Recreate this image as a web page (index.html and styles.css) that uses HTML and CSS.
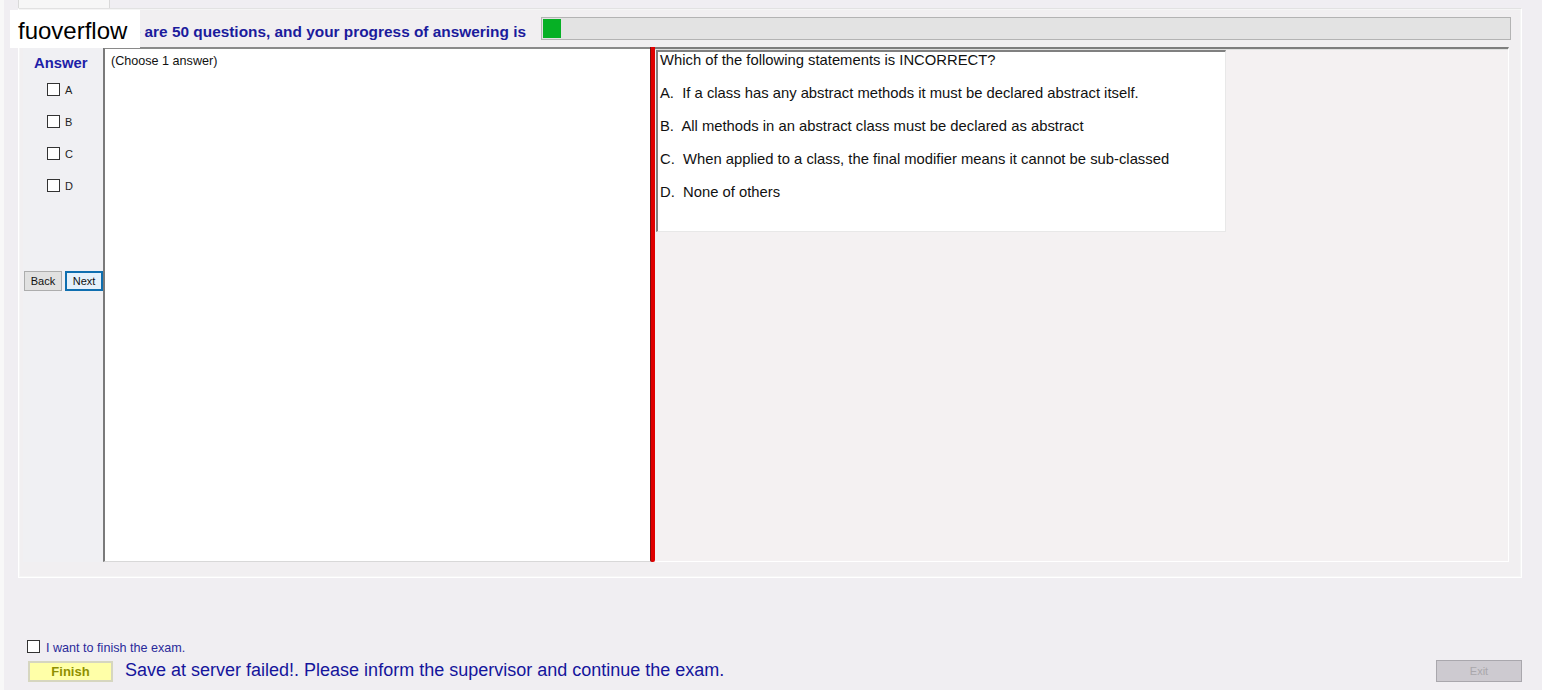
FILE: index.html
```html
<!DOCTYPE html>
<html>
<head>
<meta charset="utf-8">
<link rel="stylesheet" href="styles.css">
</head>
<body>
<div class="screen">
  <div class="tabs"><div class="tab"></div></div>
  <div class="tabpage">
    <div class="progress-row">
      <div class="progress-text">There are 50 questions, and your progress of answering is</div>
      <div class="progress-bar"><div class="progress-fill" style="width:18px"></div></div>
    </div>
    <div class="split">
      <div class="answer-panel">
        <div class="answer-title">Answer</div>
        <div class="opts">
          <label class="opt"><span class="box"></span><span class="opt-label">A</span></label>
          <label class="opt"><span class="box"></span><span class="opt-label">B</span></label>
          <label class="opt"><span class="box"></span><span class="opt-label">C</span></label>
          <label class="opt"><span class="box"></span><span class="opt-label">D</span></label>
        </div>
        <div class="nav">
          <button class="btn">Back</button>
          <button class="btn btn-focus">Next</button>
        </div>
      </div>
      <div class="answer-area">(Choose 1 answer)</div>
      <div class="splitter"></div>
      <div class="question-area">
        <div class="question-box">
          <div class="q-line">Which of the following statements is INCORRECT?</div>
          <div class="q-line">A.  If a class has any abstract methods it must be declared abstract itself.</div>
          <div class="q-line">B.  All methods in an abstract class must be declared as abstract</div>
          <div class="q-line">C.  When applied to a class, the final modifier means it cannot be sub-classed</div>
          <div class="q-line">D.  None of others</div>
        </div>
      </div>
    </div>
  </div>
  <div class="footer">
    <label class="finish-check"><span class="box box-sm"></span><span class="finish-label">I want to finish the exam.</span></label>
    <div class="footer-row">
      <div class="footer-left">
        <button class="finish-btn">Finish</button>
        <span class="status">Save at server failed!. Please inform the supervisor and continue the exam.</span>
      </div>
      <button class="exit-btn" disabled>Exit</button>
    </div>
  </div>
  <div class="watermark">fuoverflow</div>
</div>
</body>
</html>
```

FILE: styles.css
```css
html, body {
  margin: 0;
  padding: 0;
}
body {
  background: #f0eef2;
  font-family: "Liberation Sans", Arial, sans-serif;
  width: 1542px;
  height: 690px;
  overflow: hidden;
}
.screen {
  position: relative;
  width: 1542px;
  height: 690px;
  background: linear-gradient(to right, #f8f8f8 0, #f8f8f8 4px, #f0eef2 4px);
}
.tabs {
  height: 8px;
  padding-left: 18px;
}
.tab {
  width: 92px;
  height: 8px;
  box-sizing: border-box;
  border-left: 1px solid #d9d9d9;
  border-right: 1px solid #d9d9d9;
  background: #f7f7f7;
}
.tabpage {
  margin: 0 20px 0 18px;
  height: 570px;
  box-sizing: border-box;
  border: 1px solid #ffffff;
  border-top-color: #e2e2e2;
  box-shadow: inset 0 0 0 1px #f5f5f5;
  background: #f1eff1;
}
.progress-row {
  display: flex;
  align-items: center;
  height: 23px;
  margin-top: 8px;
  padding-right: 10px;
}
.progress-text {
  width: 507px;
  text-align: right;
  color: #1b1b9c;
  font-weight: bold;
  font-size: 15.4px;
  padding-right: 15px;
  padding-top: 7px;
  white-space: nowrap;
}
.progress-bar {
  flex: 1;
  height: 23px;
  box-sizing: border-box;
  border: 1px solid #b3b3b3;
  background: #e3e3e3;
  padding: 1px;
}
.progress-fill {
  height: 100%;
  background: #06b025;
}
.split {
  display: flex;
  height: 515px;
  margin: 7px 12px 0 4px;
}
.answer-panel {
  width: 80px;
  display: flex;
  flex-direction: column;
  align-items: flex-start;
  background: #f0f0f3;
}
.answer-title {
  margin-top: 8px;
  margin-left: 11px;
  color: #2020a8;
  font-weight: bold;
  font-size: 14.8px;
}
.opts {
  display: flex;
  flex-direction: column;
  gap: 19px;
  margin-top: 12px;
  margin-left: 24px;
}
.opt {
  display: flex;
  align-items: center;
  gap: 5px;
  height: 13px;
}
.box {
  display: inline-block;
  width: 13px;
  height: 13px;
  box-sizing: border-box;
  border: 1px solid #333333;
  background: #ffffff;
}
.opt-label {
  font-size: 11px;
  color: #222;
}
.nav {
  display: flex;
  gap: 3px;
  margin-top: 79px;
  margin-left: 1px;
}
.btn {
  width: 38px;
  height: 20px;
  padding: 0;
  font-family: "Liberation Sans", Arial, sans-serif;
  font-size: 11px;
  color: #111;
  background: #e1e1e1;
  border: 1px solid #adadad;
  box-sizing: border-box;
}
.btn-focus {
  border: 2px solid #0f6fb0;
  background: #e5f1fb;
}
.answer-area {
  width: 547px;
  box-sizing: border-box;
  background: #ffffff;
  border-left: 2px solid #7a7a7a;
  border-top: 2px solid #8a8a8a;
  border-bottom: 1px solid #d8d8d8;
  padding: 5px 0 0 6px;
  font-size: 12.6px;
  color: #111;
}
.splitter {
  width: 5px;
  background: #e00000;
  border-left: 1px solid #7a1010;
  box-sizing: border-box;
  border-radius: 0 0 2px 2px;
}
.question-area {
  flex: 1;
  background: #f4f1f2;
  border-top: 2px solid #7e7e7e;
  border-right: 1px solid #ffffff;
  border-bottom: 1px solid #ffffff;
  box-shadow: inset 0 1px 0 #e0e0e0;
  padding: 0 0 0 1px;
}
.question-box {
  width: 570px;
  height: 182px;
  margin-top: 1px;
  box-sizing: border-box;
  background: #ffffff;
  border-top: 2px solid #808080;
  border-left: 2px solid #808080;
  border-right: 1px solid #e8e8e8;
  border-bottom: 1px solid #e8e8e8;
  padding: 0 0 0 2px;
}
.q-line {
  font-size: 14.8px;
  color: #111;
  line-height: 17px;
  height: 33px;
  white-space: pre;
}
.footer {
  padding: 0 20px 0 27px;
}
.finish-check {
  display: flex;
  align-items: center;
  gap: 6px;
  margin-top: 62px;
  height: 13px;
}
.box-sm {
  width: 13px;
  height: 13px;
}
.finish-label {
  font-size: 12.6px;
  color: #2a2a9a;
  margin-top: 3px;
}
.footer-row {
  display: flex;
  justify-content: space-between;
  align-items: center;
  margin-top: 7px;
}
.footer-left {
  display: flex;
  align-items: center;
  gap: 12px;
  margin-left: 1px;
}
.finish-btn {
  width: 85px;
  height: 21px;
  padding: 0;
  box-sizing: border-box;
  background: #ffffa8;
  border: 2px solid #d6d6c0;
  color: #8f8f00;
  font-family: "Liberation Sans", Arial, sans-serif;
  font-weight: bold;
  font-size: 13px;
}
.status {
  color: #15159c;
  font-size: 18px;
  margin-top: -2px;
}
.exit-btn {
  width: 86px;
  height: 22px;
  padding: 0;
  box-sizing: border-box;
  background: #cdcad0;
  border: 1px solid #a9a7ad;
  color: #a9a7ab;
  font-family: "Liberation Sans", Arial, sans-serif;
  font-size: 11px;
}
.watermark {
  position: absolute;
  left: 10px;
  top: 10px;
  width: 130px;
  height: 38px;
  background: #ffffff;
  color: #000;
  font-size: 24px;
  line-height: 38px;
  padding: 2px 0 0 8px;
  box-sizing: border-box;
}
```
